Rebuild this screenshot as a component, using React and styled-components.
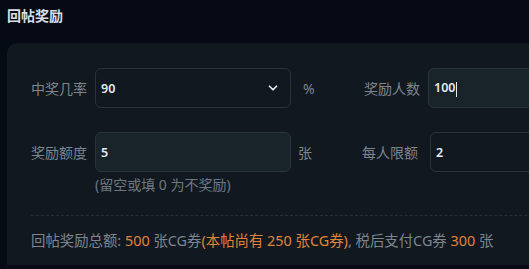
import React from "react"
import styled, { createGlobalStyle } from "styled-components"
import { ChevronDown } from "lucide-react"

const GlobalStyle = createGlobalStyle`
  body {
    margin: 0;
    background: #060a14;
    font-family: "Noto Sans", "Noto Sans CJK SC", sans-serif;
    overflow: hidden;
  }
`

const Page = styled.div`
  width: 529px;
  height: 269px;
  padding: 6px 0 0 7px;
  box-sizing: border-box;
  overflow: hidden;
`

const Title = styled.h3`
  margin: 0;
  font-size: 14px;
  line-height: 20px;
  font-weight: 700;
  color: #d9dee4;
`

const Card = styled.div`
  margin-top: 17px;
  width: 600px;
  background: #111820;
  border-radius: 10px 0 0 0;
  padding: 25px 0 14px 24px;
  box-sizing: border-box;
`

const Row = styled.div`
  display: flex;
  align-items: center;
  height: 40px;
  margin-bottom: ${(p) => p.gap || 0}px;
`

const Label = styled.div`
  width: ${(p) => p.w || 64}px;
  padding-right: ${(p) => p.pr || 8}px;
  box-sizing: border-box;
  text-align: right;
  font-size: 14px;
  color: #7d868f;
  white-space: nowrap;
`

const Field = styled.div`
  width: ${(p) => (p.w ? p.w + "px" : "auto")};
  flex: ${(p) => (p.w ? "none" : 1)};
  height: 40px;
  box-sizing: border-box;
  border: 1px solid #2b343c;
  border-radius: 6px;
  background: ${(p) => (p.filled ? "#18232a" : "#111820")};
  display: flex;
  align-items: center;
  justify-content: space-between;
  padding: 0 10px 0 5px;
  font-size: 12.5px;
  font-weight: 600;
  color: #e4eaef;
`

const Caret = styled.span`
  display: inline-block;
  width: 1.5px;
  height: 15px;
  background: #e4eaef;
  vertical-align: middle;
  margin-left: 0.5px;
`

const Unit = styled.div`
  width: ${(p) => p.w}px;
  padding-left: ${(p) => p.pl}px;
  box-sizing: border-box;
  font-size: 14px;
  color: #7d868f;
`

const Hint = styled.div`
  margin: 4px 0 0 64px;
  font-size: 14px;
  line-height: 18px;
  color: #6f7881;
`

const Divider = styled.div`
  margin: 21px 0 0 0;
  border-top: 1px dashed #262e36;
`

const Summary = styled.div`
  margin-top: 15px;
  font-size: 14.4px;
  line-height: 20px;
  color: #7d868f;
  white-space: nowrap;
`

const Hl = styled.span`
  color: #e0843a;
`

export default function App() {
  return (
    <Page>
      <GlobalStyle />
      <Title>回帖奖励</Title>
      <Card>
        <Row gap={24}>
          <Label>中奖几率</Label>
          <Field w={196}>
            <span>90</span>
            <ChevronDown size={14} strokeWidth={3} color="#e4eaef" />
          </Field>
          <Unit w={60} pl={12}>%</Unit>
          <Label w={77}>奖励人数</Label>
          <Field filled>
            <span>
              100<Caret />
            </span>
          </Field>
        </Row>
        <Row>
          <Label>奖励额度</Label>
          <Field w={196} filled>
            <span>5</span>
          </Field>
          <Unit w={60} pl={7}>张</Unit>
          <Label w={79} pr={12}>每人限额</Label>
          <Field>
            <span>2</span>
          </Field>
        </Row>
        <Hint>(留空或填 0 为不奖励)</Hint>
        <Divider />
        <Summary>
          回帖奖励总额: <Hl>500</Hl> 张CG券<Hl>(本帖尚有 250 张CG券)</Hl>, 税后支付CG券 <Hl>300</Hl> 张
        </Summary>
      </Card>
    </Page>
  )
}
